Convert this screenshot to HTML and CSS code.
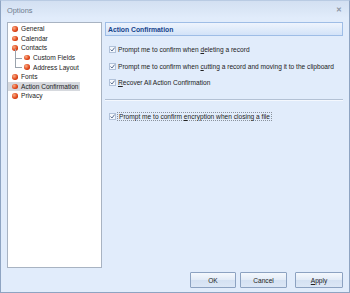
FILE: index.html
```html
<!DOCTYPE html>
<html>
<head>
<meta charset="utf-8">
<link rel="stylesheet" href="styles.css">
</head>
<body>
<div class="window">
  <div class="titlebar">
    <span class="title">Options</span>
    <span class="close">&#x2715;</span>
  </div>
  <div class="main">
    <div class="tree">
      <div class="item"><span class="dot"></span>General</div>
      <div class="item"><span class="dot"></span>Calendar</div>
      <div class="item"><span class="dot"></span>Contacts</div>
      <div class="children">
        <div class="item child"><span class="branch"></span><span class="dot"></span>Custom Fields</div>
        <div class="item child last"><span class="branch"></span><span class="dot"></span>Address Layout</div>
      </div>
      <div class="item"><span class="dot"></span>Fonts</div>
      <div class="item selected"><span class="dot"></span><span class="label">Action Confirmation</span></div>
      <div class="item"><span class="dot"></span>Privacy</div>
    </div>
    <div class="content">
      <div class="header">Action Confirmation</div>
      <div class="group">
        <div class="check"><span class="box"><svg width="7" height="7" viewBox="0 0 7 7"><path d="M1.5 3.5 L3 5 L5.6 1.6" fill="none" stroke="#5d7192" stroke-width="1"/></svg></span><span>Prompt me to confirm when <u>d</u>eleting a record</span></div>
        <div class="check"><span class="box"><svg width="7" height="7" viewBox="0 0 7 7"><path d="M1.5 3.5 L3 5 L5.6 1.6" fill="none" stroke="#5d7192" stroke-width="1"/></svg></span><span>Prompt me to confirm when <u>c</u>utting a record and moving it to the clipboard</span></div>
        <div class="check"><span class="box"><svg width="7" height="7" viewBox="0 0 7 7"><path d="M1.5 3.5 L3 5 L5.6 1.6" fill="none" stroke="#5d7192" stroke-width="1"/></svg></span><span><u>R</u>ecover All Action Confirmation</span></div>
      </div>
      <div class="sep"></div>
      <div class="group">
        <div class="check"><span class="box"><svg width="7" height="7" viewBox="0 0 7 7"><path d="M1.5 3.5 L3 5 L5.6 1.6" fill="none" stroke="#5d7192" stroke-width="1"/></svg></span><span class="focus">Prompt me to confirm <u>e</u>ncryption when closing a file</span></div>
      </div>
    </div>
  </div>
  <div class="buttons">
    <button class="btn ok">OK</button>
    <button class="btn cancel">Cancel</button>
    <button class="btn apply"><u>A</u>pply</button>
  </div>
</div>
</body>
</html>
```
FILE: styles.css
```css
html, body {
  margin: 0;
  padding: 0;
  background: #ffffff;
}
body {
  font-family: "Liberation Sans", Arial, sans-serif;
  font-size: 6.6px;
  color: #222222;
}
.window {
  width: 350px;
  height: 293px;
  box-sizing: border-box;
  border: 1px solid #8ea4c2;
  border-top-color: #b9cbe3;
  background: #e1ecfb;
  display: flex;
  flex-direction: column;
}
.titlebar {
  height: 17px;
  flex: none;
  display: flex;
  align-items: center;
  justify-content: space-between;
  padding: 0 6px;
  background: linear-gradient(#d3e0f2, #dbe7f7 60%, #e1ecfb);
}
.title {
  color: #6f7c8e;
  font-size: 7.4px;
  padding-top: 1px;
}
.close {
  color: #8c96a3;
  font-size: 7px;
  font-weight: bold;
  margin-right: 1px;
}
.main {
  flex: none;
  height: 246px;
  margin-top: 4px;
  padding: 0 6px;
  display: flex;
  gap: 3px;
}
.tree {
  width: 95px;
  flex: none;
  box-sizing: border-box;
  border: 1px solid #a8b3c2;
  background: #ffffff;
  padding-top: 1px;
}
.item {
  height: 9.6px;
  display: flex;
  align-items: center;
  padding-left: 4px;
  white-space: nowrap;
  position: relative;
}
.dot {
  width: 5.5px;
  height: 5.5px;
  border-radius: 50%;
  background: radial-gradient(circle at 35% 35%, #f8ae88 0%, #e24a1d 55%, #a9250a 100%);
  margin-right: 3.5px;
  flex: none;
}
.child {
  padding-left: 16px;
}
.branch {
  position: absolute;
  left: 7px;
  top: -4px;
  width: 6px;
  height: 8.8px;
  border-left: 1px solid #9aa3ad;
  border-bottom: 1px solid #9aa3ad;
}
.selected .label {
  background: #d6d9de;
  margin-left: -13px;
  padding-left: 13px;
  padding-right: 1px;
  line-height: 9.6px;
}
.selected .dot {
  position: relative;
  z-index: 1;
}
.content {
  flex: 1;
  display: flex;
  flex-direction: column;
}
.header {
  height: 14px;
  box-sizing: border-box;
  border: 1px solid #9ebde6;
  background: linear-gradient(#eef4fd, #d3e3f8);
  color: #15428b;
  font-weight: bold;
  font-size: 6.8px;
  display: flex;
  align-items: center;
  padding-left: 2px;
}
.group {
  padding-left: 4px;
  margin-top: 5.5px;
}
.check {
  height: 16.5px;
  display: flex;
  align-items: center;
  white-space: nowrap;
}
.box {
  width: 7px;
  height: 7px;
  box-sizing: border-box;
  border: 1px solid #b1c2da;
  background: #f3f7fc;
  margin-right: 2px;
  display: flex;
  align-items: center;
  justify-content: center;
  flex: none;
}
.box svg {
  display: block;
  margin: -1px;
}
.focus {
  border: 1px dotted #8a929c;
  padding: 0 1px;
  margin-left: -1px;
}
.sep {
  margin-top: 8px;
  height: 1px;
  background: #b3c1d4;
  border-bottom: 1px solid #f4f8fe;
}
.sep + .group {
  margin-top: 7px;
}
.buttons {
  flex: none;
  margin-top: 4px;
  height: 16px;
  display: flex;
  justify-content: flex-end;
  padding-right: 6px;
}
.btn {
  height: 16px;
  box-sizing: border-box;
  border: 1px solid #8ca2c1;
  border-radius: 1px;
  background: linear-gradient(#f4f8fd, #e2ebf7 50%, #d4e1f2 51%, #dce7f6);
  font-family: "Liberation Sans", Arial, sans-serif;
  font-size: 6.6px;
  color: #222222;
  padding: 0;
}
.ok { width: 46px; }
.cancel { width: 47px; margin-left: 4px; }
.apply { width: 48px; margin-left: 8px; }
```
